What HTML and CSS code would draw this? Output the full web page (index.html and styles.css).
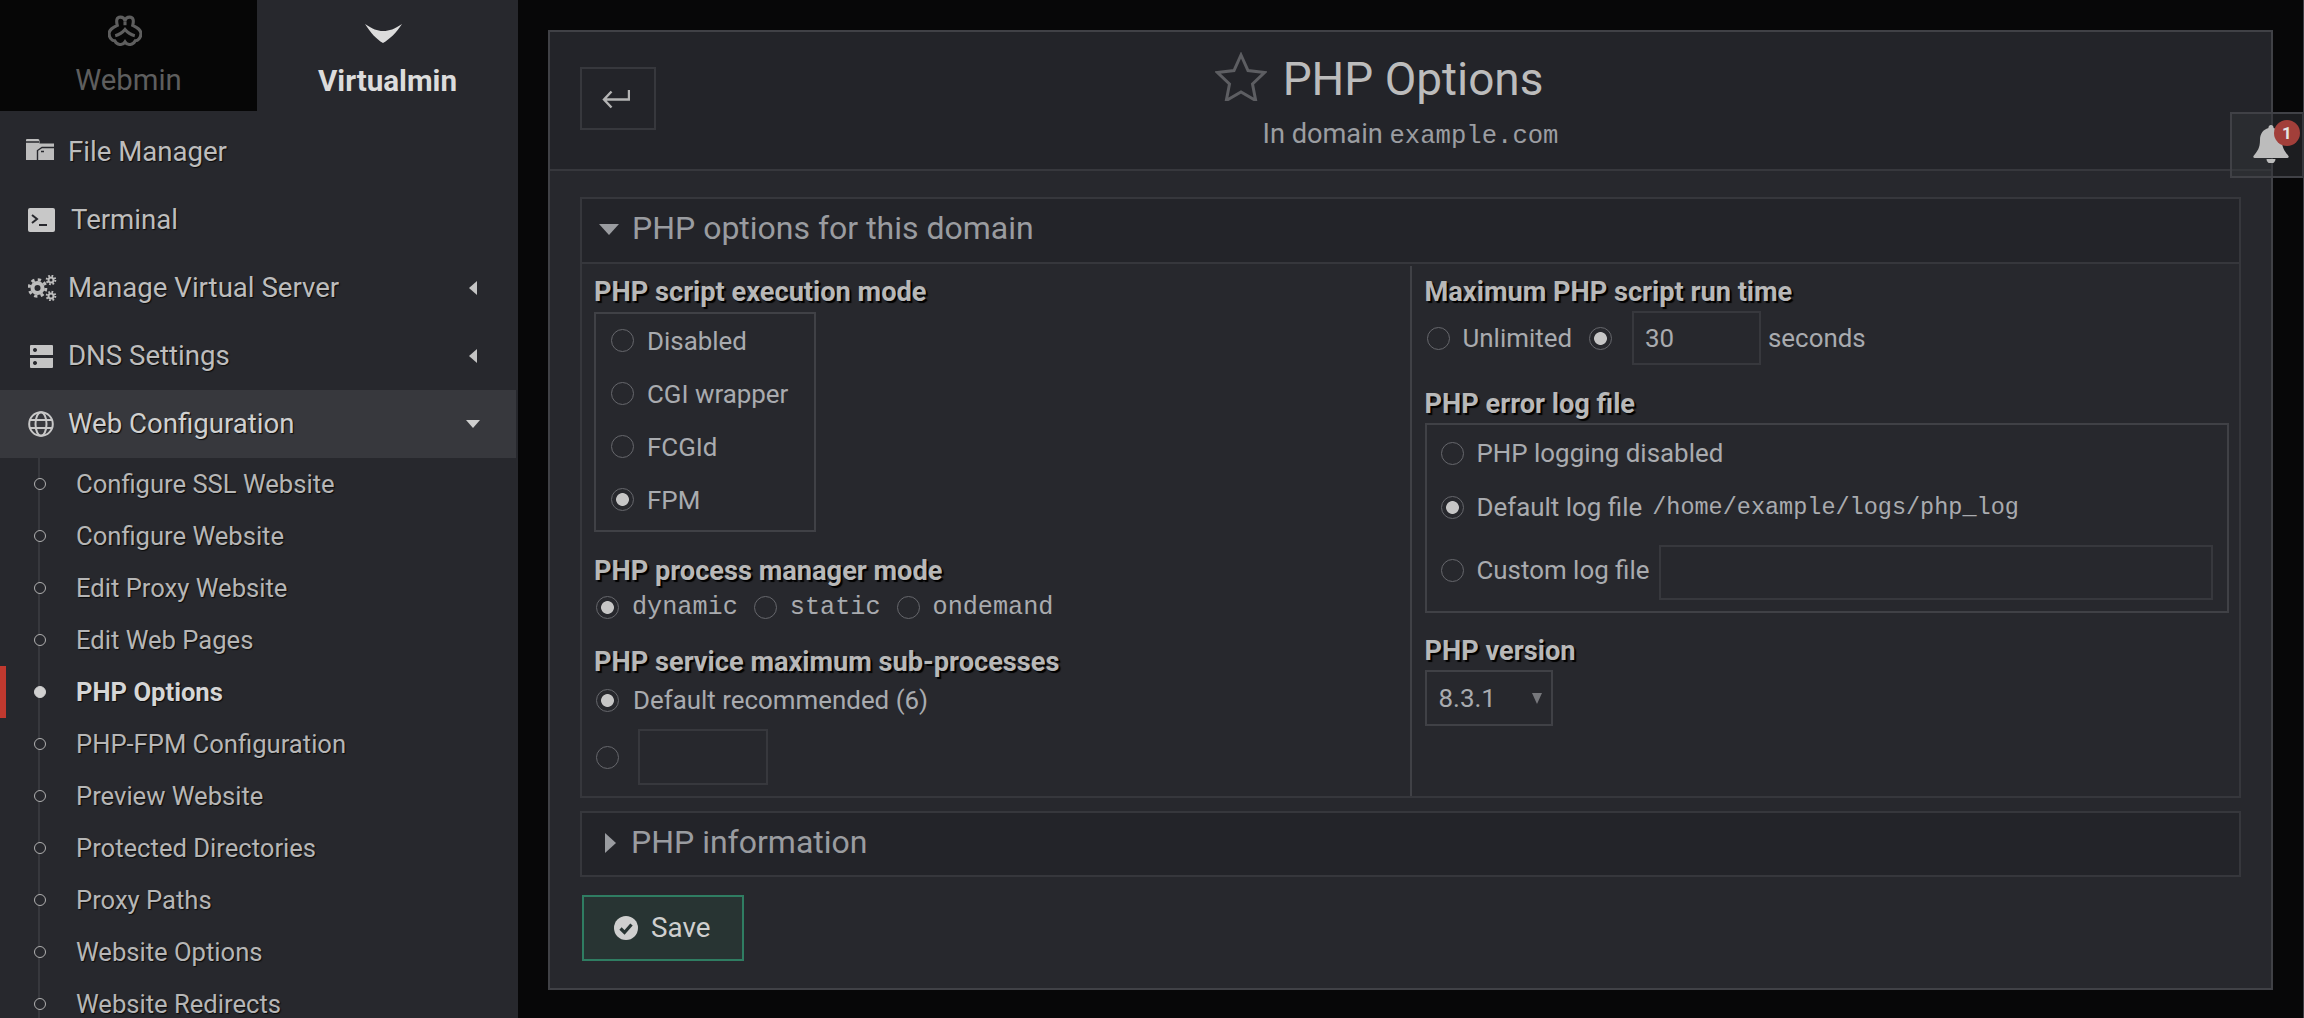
FILE: index.html

```html
<!DOCTYPE html>
<html>
<head>
    <title>PHP Options</title>
    <meta charset="UTF-8">
    <link rel="stylesheet" href="styles.css">
</head>
<body>
    <aside class="sidebar">
        <div class="tabs">
            <a class="tab tab-off">
                <svg class="tab-icon" width="34" height="31" viewBox="0 0 33 30" fill="none" stroke="#5e5e5e" stroke-width="3">
                    <path d="M9 10C8 6 8 2 12 2C14 2 16 3.500 16.500 5.500C17 3.500 19 2 21 2C25 2 25 6 24 10C28 12 32 14 32 18C32 22 29 25 26.500 25C24.500 29 19 30 16.500 26C14 30 8.500 29 6.500 25C4 25 1 22 1 18C1 14 5 12 9 10Z"/>
                    <path d="M16.500 6V10M7 20C11 19 14 17 16.500 14C19 17 22 19 26 20"/>
                </svg>
                <span>Webmin</span>
            </a>
            <a class="tab tab-on">
                <svg class="tab-icon" width="37" height="19" viewBox="0 0 37 19"><path d="M0 0C8 5 12 7 18 7C25 7 29 5 37 0C31 9 25 15 18 19C11 15 6 9 0 0Z" fill="#dcdcdc"/></svg>
                <span>Virtualmin</span>
            </a>
        </div>

        <nav class="menu">
            <a class="menu-item">
                <svg class="menu-icon folder-icon" width="28" height="21" viewBox="0 0 28 21">
                    <path d="M0 1Q0 0 1 0H12Q13.500 0 13.500 2V4.500H28V21H0Z" fill="#bdbdbd"/>
                    <path d="M0 3H13M11.500 21V11.500L16 8.500H28M15 12.500H18" fill="none" stroke="#27282d" stroke-width="1.400"/>
                </svg>
                <span class="menu-text">File Manager</span>
            </a>
            <a class="menu-item">
                <svg class="menu-icon term-icon" width="27" height="24" viewBox="0 0 27 24"><rect width="27" height="24" rx="2" fill="#c8c8c8"/><path d="M4 7l5 4-5 4M11 17h8" fill="none" stroke="#27282d" stroke-width="2"/></svg>
                <span class="menu-text">Terminal</span>
            </a>
            <a class="menu-item">
                <svg class="menu-icon gear-icon" width="30" height="26" viewBox="0 0 30 26" fill="none" stroke="#bdbdbd">
                    <circle cx="9.500" cy="13" r="5" stroke-width="4"/>
                    <circle cx="9.500" cy="13" r="8.300" stroke-width="3" stroke-dasharray="3.260 3.260"/>
                    <circle cx="23" cy="5" r="2.500" stroke-width="2"/>
                    <circle cx="23" cy="5" r="4.300" stroke-width="2" stroke-dasharray="1.700 1.680"/>
                    <circle cx="23" cy="21" r="2.500" stroke-width="2"/>
                    <circle cx="23" cy="21" r="4.300" stroke-width="2" stroke-dasharray="1.700 1.680"/>
                </svg>
                <span class="menu-text">Manage Virtual Server</span>
                <span class="arrow-left"></span>
            </a>
            <a class="menu-item">
                <svg class="menu-icon dns-icon" width="23" height="23" viewBox="0 0 23 23"><path fill-rule="evenodd" d="M1 0H22Q23 0 23 1V10H0V1Q0 0 1 0ZM1 13H23V22Q23 23 22 23H1Q0 23 0 22V13ZM5 3a2 2 0 1 0 .01 0ZM5 16a2 2 0 1 0 .01 0Z" fill="#c4c4c4"/></svg>
                <span class="menu-text">DNS Settings</span>
                <span class="arrow-left"></span>
            </a>
            <a class="menu-item menu-open">
                <svg class="menu-icon" width="26" height="26" viewBox="0 0 26 26" fill="none" stroke="#c8c8c8" stroke-width="2"><circle cx="13" cy="13" r="11.800"/><ellipse cx="13" cy="13" rx="5.500" ry="11.800"/><path d="M2 9h22M2 17h22"/></svg>
                <span class="menu-text">Web Configuration</span>
                <span class="arrow-down"></span>
            </a>
            <div class="submenu">
                <a class="sub-item">Configure SSL Website</a>
                <a class="sub-item">Configure Website</a>
                <a class="sub-item">Edit Proxy Website</a>
                <a class="sub-item">Edit Web Pages</a>
                <a class="sub-item sub-current">PHP Options</a>
                <a class="sub-item">PHP-FPM Configuration</a>
                <a class="sub-item">Preview Website</a>
                <a class="sub-item">Protected Directories</a>
                <a class="sub-item">Proxy Paths</a>
                <a class="sub-item">Website Options</a>
                <a class="sub-item">Website Redirects</a>
            </div>
        </nav>
    </aside>

    <main class="content">
        <div class="panel">
            <header class="panel-head">
                <a class="back-btn">
                    <svg width="28" height="20" viewBox="0 0 28 20" fill="none" stroke="#b4b4b4" stroke-width="2.400"><path d="M27 1v9.500H2M9.500 2.500L2 10.500l7.500 8"/></svg>
                </a>
                <div class="page-title">
                    <h1>
                        <svg class="star" width="52" height="49" viewBox="0 0 52 49" fill="none" stroke="#5d5e62" stroke-width="3"><path d="M26 3l7 15.500 16.500 2-12 11.500 3.200 16.500L26 40l-14.700 8.500L14.500 32l-12-11.500 16.500-2Z"/></svg>
                        PHP Options
                    </h1>
                    <p>In domain <span class="mono-title">example.com</span></p>
                </div>
            </header>

            <div class="panel-body">
                <section class="box">
                    <div class="box-head">
                        <span class="tri-down"></span>
                        <span class="box-title">PHP options for this domain</span>
                    </div>
                    <div class="columns">
                        <div class="col">
                            <div class="field-label">PHP script execution mode</div>
                            <div class="mode-box">
                                <label class="mode-row"><input type="radio" name="mode"><span>Disabled</span></label>
                                <label class="mode-row"><input type="radio" name="mode"><span>CGI wrapper</span></label>
                                <label class="mode-row"><input type="radio" name="mode"><span>FCGId</span></label>
                                <label class="mode-row"><input type="radio" name="mode" checked><span>FPM</span></label>
                            </div>

                            <div class="field-label gap-top">PHP process manager mode</div>
                            <div class="pm-row">
                                <label class="inline"><input type="radio" name="pm" checked><span class="mono">dynamic</span></label>
                                <label class="inline"><input type="radio" name="pm"><span class="mono">static</span></label>
                                <label class="inline"><input type="radio" name="pm"><span class="mono">ondemand</span></label>
                            </div>

                            <div class="field-label gap-top">PHP service maximum sub-processes</div>
                            <label class="sub-row"><input type="radio" name="children" checked><span>Default recommended (6)</span></label>
                            <div class="sub-row sub-custom">
                                <input type="radio" name="children">
                                <input type="text" class="text-input input-children">
                            </div>
                        </div>

                        <div class="col col-right">
                            <div class="field-label">Maximum PHP script run time</div>
                            <div class="time-row">
                                <label class="inline"><input type="radio" name="time"><span>Unlimited</span></label>
                                <input type="radio" name="time" checked>
                                <input type="text" class="text-input input-time" value="30">
                                <span>seconds</span>
                            </div>

                            <div class="field-label gap-top">PHP error log file</div>
                            <div class="log-box">
                                <label class="log-row log-first"><input type="radio" name="log"><span>PHP logging disabled</span></label>
                                <label class="log-row log-second"><input type="radio" name="log" checked><span>Default log file</span><span class="mono-small">/home/example/logs/php_log</span></label>
                                <div class="log-row log-third">
                                    <input type="radio" name="log"><span>Custom log file</span>
                                    <input type="text" class="text-input input-log">
                                </div>
                            </div>

                            <div class="field-label version-label">PHP version</div>
                            <div class="select-wrap">
                                <select class="version"><option>8.3.1</option></select>
                            </div>
                        </div>
                    </div>
                </section>

                <section class="box box-closed">
                    <div class="box-head">
                        <span class="tri-right"></span>
                        <span class="box-title">PHP information</span>
                    </div>
                </section>

                <button class="save-btn">
                    <svg width="24" height="24" viewBox="0 0 24 24"><circle cx="12" cy="12" r="12" fill="#cfcfcf"/><path d="M6.500 12.500l4 4 7-8" fill="none" stroke="#283433" stroke-width="3.200"/></svg>
                    <span class="save-text">Save</span>
                </button>
            </div>
        </div>

        <div class="notify">
            <svg width="36" height="38" viewBox="0 0 36 38"><path d="M18 0a2.500 2.500 0 0 1 2.500 3C26 4.500 29 9 29 15c0 8 2.500 11 6.500 16 .5 1 0 2-1 2H1.500c-1 0-1.500-1-1-2C4.500 26 7 23 7 15 7 9 10 4.500 15.500 3A2.500 2.500 0 0 1 18 0ZM13.500 34h9a4.500 4.500 0 0 1-9 0Z" fill="#bcbcbc"/></svg>
            <span class="badge">1</span>
        </div>
    </main>
</body>
</html>
```

FILE: styles.css

```css
* {
    box-sizing: border-box;
}
html, body {
    height: 100%;
    margin: 0;
}
body {
    display: flex;
    height: 1018px;
    overflow: hidden;
    background: #070708;
    font-family: Roboto, "Liberation Sans", sans-serif;
    font-size: 25.9px;
    color: #a9abaf;
}
a {
    text-decoration: none;
    color: inherit;
}

/* sidebar */
.sidebar {
    flex: 0 0 518px;
    height: 1018px;
    overflow: hidden;
    background: #27282d;
    font-size: 25.6px;
}
.tabs {
    display: flex;
    height: 111px;
}
.tab {
    display: flex;
    flex-direction: column;
    align-items: center;
    font-size: 29.3px;
    line-height: 34px;
}
.tab-off {
    flex: 0 0 257px;
    background: #060606;
    color: #5e5e5e;
    padding-top: 15px;
}
.tab-on {
    flex: 1;
    color: #dcdcdc;
    font-weight: 700;
    font-size: 29.6px;
    padding-top: 24px;
}
.tab-off .tab-icon {
    margin-right: 8px;
    margin-bottom: 17px;
}
.tab-on .tab-icon {
    margin-right: 8px;
    margin-bottom: 21px;
}
.menu {
    padding-top: 7px;
}
.menu-item {
    display: flex;
    align-items: center;
    height: 68px;
    padding-left: 26px;
    font-size: 27.6px;
    color: #bdbdbd;
    text-shadow: 1px 1px 1px #0b0b0b;
}
.menu-text {
    margin: 0 0 1px 14px;
    flex: 1;
}
.folder-icon {
    margin-bottom: 5px;
}
.term-icon {
    margin-left: 2px;
    margin-right: 2px;
}
.gear-icon {
    margin-left: 2px;
    margin-right: -4px;
}
.dns-icon {
    margin-left: 4px;
    margin-right: 1px;
}
.menu-open {
    background: #37383d;
    color: #d0d0d0;
    margin-right: 2px;
}
.menu-open .menu-icon {
    margin-left: 2px;
}
.arrow-left {
    width: 0;
    height: 0;
    margin-right: 41px;
    border-top: 7px solid transparent;
    border-bottom: 7px solid transparent;
    border-right: 8px solid #c4c4c4;
}
.arrow-down {
    width: 0;
    height: 0;
    margin-right: 36px;
    border-left: 7px solid transparent;
    border-right: 7px solid transparent;
    border-top: 8px solid #d0d0d0;
}
.submenu {
    position: relative;
}
.submenu::before {
    content: "";
    position: absolute;
    left: 38px;
    top: 0;
    bottom: 0;
    width: 2px;
    background: #37383d;
}
.sub-item {
    position: relative;
    display: block;
    height: 52px;
    line-height: 52px;
    padding-left: 76px;
    color: #b6b6b6;
    white-space: nowrap;
    text-shadow: 1px 1px 1px #0b0b0b;
}
.sub-item::before {
    content: "";
    position: absolute;
    left: 34px;
    top: 20px;
    width: 10px;
    height: 10px;
    border: 1.500px solid #b0b0b0;
    border-radius: 50%;
    background: #27282d;
}
.sub-current {
    font-weight: 700;
    color: #d6d6d6;
}
.sub-current::before {
    background: #d0d0d0;
    border-color: #d0d0d0;
}
.sub-current::after {
    content: "";
    position: absolute;
    left: 0;
    top: 0;
    width: 6px;
    height: 52px;
    background: #c0392f;
}

/* main area */
.content {
    flex: 1;
    position: relative;
    padding: 30px 30px 28px 30px;
    border-right: 1px solid #3f4045;
}
.panel {
    height: 960px;
    border: 2px solid #404146;
    background: #27282d;
}
.panel-head {
    position: relative;
    height: 139px;
    padding: 35px 0 0 30px;
    border-bottom: 2px solid #37383d;
    background: #232429;
}
.back-btn {
    display: flex;
    align-items: center;
    justify-content: center;
    width: 76px;
    height: 63px;
    padding-right: 4px;
    border: 2px solid #37383d;
}
.page-title {
    position: absolute;
    left: 0;
    right: 0;
    top: 19px;
    text-align: center;
}
.page-title h1 {
    display: flex;
    align-items: center;
    justify-content: center;
    gap: 16px;
    height: 56px;
    margin: 0;
    padding-left: 5px;
    font-size: 45.9px;
    font-weight: 400;
    color: #bcbcbc;
}
.star {
    margin: -6px 0 0 -68px;
}
.page-title p {
    margin: 9px 0 0;
    font-size: 27.2px;
    line-height: 36px;
    color: #9b9da1;
}
.mono-title {
    font-family: "Liberation Mono", "DejaVu Sans Mono", monospace;
    font-size: 25.6px;
}
.panel-body {
    padding: 26px 30px 0;
}
.box {
    border: 2px solid #36373c;
}
.box-head {
    display: flex;
    align-items: center;
    height: 63px;
    padding-bottom: 2px;
    font-size: 32px;
    color: #9a9ca0;
    background: #232429;
}
.box-title {
    margin-bottom: 3px;
}
.tri-down {
    width: 0;
    height: 0;
    margin: 0 13px 0 17px;
    border-left: 10px solid transparent;
    border-right: 10px solid transparent;
    border-top: 11px solid #9a9ca0;
}
.tri-right {
    width: 0;
    height: 0;
    margin: 0 15px 0 23px;
    border-top: 10px solid transparent;
    border-bottom: 10px solid transparent;
    border-left: 11px solid #9a9ca0;
}
.columns {
    display: grid;
    grid-template-columns: 827.5px 1fr;
    height: 534px;
    border-top: 2px solid #36373c;
}
.col {
    padding: 11px 0 0 12px;
}
.col-right {
    margin-top: 2px;
    padding: 9px 0 0 13px;
    border-left: 2px solid #404146;
}
.field-label {
    height: 32px;
    line-height: 34px;
    margin-bottom: 5px;
    font-size: 27.2px;
    font-weight: 700;
    color: #b8b8b8;
    white-space: nowrap;
    text-shadow: 2px 2px 1px #000;
}
.gap-top {
    margin-top: 22px;
}
.version-label {
    margin-top: 21px;
}

/* form bits */
input[type="radio"] {
    appearance: none;
    flex: none;
    width: 23px;
    height: 23px;
    margin: 0;
    border: 1.500px solid #66676c;
    border-radius: 50%;
}
input[type="radio"]:checked {
    background: radial-gradient(circle, #c6c6c6 0 6px, transparent 6.800px);
}
label {
    display: flex;
    align-items: center;
}
.mode-box {
    width: 222px;
    height: 220px;
    border: 2px solid #404146;
}
.mode-row {
    gap: 13px;
    height: 53px;
    padding-left: 15px;
}
.mono, .mono-small {
    font-family: "Liberation Mono", "DejaVu Sans Mono", monospace;
}
.mono {
    font-size: 25.2px;
}
.mono-small {
    font-size: 23.5px;
    margin-left: -3px;
}
.pm-row {
    display: flex;
    align-items: center;
    height: 32px;
    padding-left: 2px;
}
.inline {
    gap: 13px;
    margin-right: 16px;
}
.sub-row {
    display: flex;
    align-items: center;
    gap: 14px;
    height: 36px;
    padding-left: 2px;
}
.sub-custom {
    height: 56px;
    margin-top: 11px;
    gap: 19px;
}
.text-input {
    height: 54px;
    padding: 0 11px;
    border: 2px solid #37383d;
    background: transparent;
    font: inherit;
    color: #a9abaf;
}
.input-children {
    width: 130px;
    height: 56px;
}
.time-row {
    display: flex;
    align-items: center;
    height: 54px;
    margin: -1px 0 3px;
    padding-left: 2px;
}
.time-row .inline {
    margin-right: 17px;
}
.input-time {
    width: 129px;
    margin: 0 7px 0 20px;
}
.log-box {
    width: 804px;
    height: 190px;
    margin-top: -1px;
    border: 2px solid #404146;
}
.log-row {
    display: flex;
    align-items: center;
    gap: 13px;
    padding-left: 14px;
}
.log-first {
    height: 56px;
}
.log-second {
    height: 52px;
}
.log-third {
    height: 60px;
    margin-top: 7px;
}
.input-log {
    width: 554px;
    height: 55px;
    margin: 5px 0 0 -4px;
}
.select-wrap {
    position: relative;
    width: 128px;
    height: 56px;
    margin-top: -1px;
}
.select-wrap::after {
    content: "";
    position: absolute;
    right: 11px;
    top: 23px;
    border-left: 5.500px solid transparent;
    border-right: 5.500px solid transparent;
    border-top: 11px solid #77787c;
}
.version {
    appearance: none;
    width: 100%;
    height: 100%;
    padding: 0 12px;
    border: 2px solid #404146;
    border-radius: 0;
    background: transparent;
    font: inherit;
    color: #a9abaf;
}
.box-closed {
    margin-top: 13px;
}
.box-closed .box-head {
    height: 62px;
}
.save-btn {
    display: flex;
    align-items: center;
    gap: 13px;
    width: 162px;
    height: 66px;
    margin: 18px 0 0 2px;
    padding: 0 0 0 30px;
    border: 2px solid #2f7d62;
    background: #283433;
    font-family: inherit;
    font-size: 27.8px;
    color: #cfcfcf;
}
.save-text {
    margin-bottom: 2px;
}

/* bell sticks over the panel edge */
.notify {
    position: absolute;
    right: -1px;
    top: 112px;
    width: 74px;
    height: 66px;
    border: 2px solid #404146;
    border-right-color: #37383d;
    background: rgba(50, 51, 56, 0.5);
    padding: 11px 0 0 21px;
}
.badge {
    position: absolute;
    left: 42px;
    top: 6px;
    width: 26px;
    height: 26px;
    border-radius: 50%;
    background: #a23f3a;
    color: #e4e4e4;
    font-size: 17px;
    font-weight: 700;
    line-height: 26px;
    text-align: center;
}
```
